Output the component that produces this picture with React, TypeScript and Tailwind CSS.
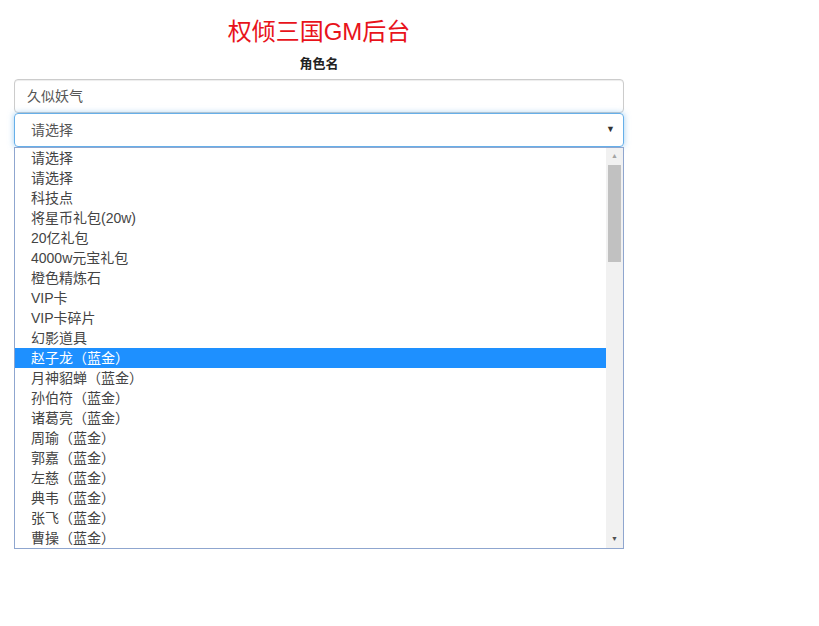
const options: string[] = [
    '请选择',
    '请选择',
    '科技点',
    '将星币礼包(20w)',
    '20亿礼包',
    '4000w元宝礼包',
    '橙色精炼石',
    'VIP卡',
    'VIP卡碎片',
    '幻影道具',
    '赵子龙（蓝金）',
    '月神貂蝉（蓝金）',
    '孙伯符（蓝金）',
    '诸葛亮（蓝金）',
    '周瑜（蓝金）',
    '郭嘉（蓝金）',
    '左慈（蓝金）',
    '典韦（蓝金）',
    '张飞（蓝金）',
    '曹操（蓝金）',
]

const active = 10

export default function App() {
    return (
        <div className="min-h-[626px] bg-white font-['Liberation_Sans','Noto_Sans_CJK_SC',sans-serif] text-[#333]">
            <div className="ml-[14px] w-[610px] flex flex-col">
                <div className="pt-[16px] text-center text-[24px] leading-[32px] text-[#e8131b]">权倾三国GM后台</div>
                <div className="mt-[7px] text-center text-[13px] leading-[18px] font-bold text-[#222]">角色名</div>
                <div className="mt-[6px] h-[34px] border border-[#ccc] rounded-[4px] flex items-center px-[12px] text-[14px] text-[#555] shadow-[inset_0_1px_1px_rgba(0,0,0,0.075)]">
                    久似妖气
                </div>
                <div className="h-[34px] border border-[#66afe9] rounded-[4px] flex items-center justify-between pl-[16px] pr-[8px] text-[14px] text-[#555] shadow-[0_0_6px_rgba(102,175,233,0.6)]">
                    <span>请选择</span>
                    <span className="text-[9px] text-[#333]">▼</span>
                </div>
                <div className="h-[402px] border border-[#8fa6cf] flex bg-white">
                    <div className="flex-1 flex flex-col">
                        {options.map((item, index) => (
                            <div
                                key={index}
                                className={`h-[20px] leading-[20px] pl-[16px] text-[14px] ${index === active ? 'bg-[#1e90ff] text-white' : 'text-[#444]'}`}>
                                {item}
                            </div>
                        ))}
                    </div>
                    <div className="w-[17px] bg-[#f1f1f1] flex flex-col items-center">
                        <div className="h-[17px] flex items-center justify-center text-[7px] text-[#a3a3a3]">▲</div>
                        <div className="w-[13px] h-[97px] bg-[#c1c1c1]"></div>
                        <div className="flex-1"></div>
                        <div className="h-[17px] flex items-center justify-center text-[7px] text-[#505050]">▼</div>
                    </div>
                </div>
            </div>
        </div>
    )
}
